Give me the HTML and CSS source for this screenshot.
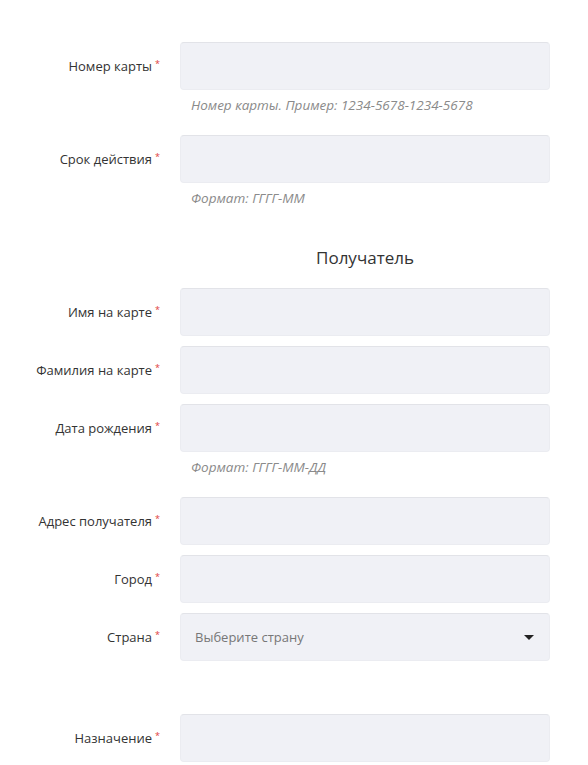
FILE: index.html
```html
<!DOCTYPE html>
<html>
  <head>
    <meta charset="UTF-8">
    <title>Перевод на карту</title>
    <link rel="stylesheet" href="styles.css">
  </head>
  <body>
    <form class="form">
      <!-- карта -->
      <div class="field">
        <label class="label">Номер карты<span class="req">*</span></label>
        <input type="text" class="input">
        <div class="hint">Номер карты. Пример: 1234-5678-1234-5678</div>
      </div>
      <div class="field">
        <label class="label">Срок действия<span class="req">*</span></label>
        <input type="text" class="input">
        <div class="hint">Формат: ГГГГ-ММ</div>
      </div>

      <div class="section-title">Получатель</div>

      <div class="field">
        <label class="label">Имя на карте<span class="req">*</span></label>
        <input type="text" class="input">
      </div>
      <div class="field">
        <label class="label">Фамилия на карте<span class="req">*</span></label>
        <input type="text" class="input">
      </div>
      <div class="field">
        <label class="label">Дата рождения<span class="req">*</span></label>
        <input type="text" class="input">
        <div class="hint">Формат: ГГГГ-ММ-ДД</div>
      </div>
      <div class="field">
        <label class="label">Адрес получателя<span class="req">*</span></label>
        <input type="text" class="input">
      </div>
      <div class="field">
        <label class="label">Город<span class="req">*</span></label>
        <input type="text" class="input">
      </div>
      <div class="field field-spaced">
        <label class="label">Страна<span class="req">*</span></label>
        <div class="input select">
          <span class="select-text">Выберите страну</span>
          <svg class="caret" width="10" height="5" viewBox="0 0 10 5"><path d="M0 0h10L5 5z" fill="#222"/></svg>
        </div>
      </div>
      <div class="field">
        <label class="label">Назначение<span class="req">*</span></label>
        <input type="text" class="input">
      </div>
    </form>
  </body>
</html>
```

FILE: styles.css
```css
/* базовые стили */
html,body{margin:0;padding:0;background:#fff;color:#333;font-family:'Open Sans','Liberation Sans',sans-serif;}
.form{padding-top:42px;width:588px;}

/* строки формы */
.field{display:grid;grid-template-columns:160px 370px;column-gap:20px;align-items:center;margin-bottom:10px;}
.field-spaced{margin-bottom:53px;}
.label{text-align:right;font-size:13px;color:#333;white-space:nowrap;}
.req{color:#e0403a;font-size:9px;position:relative;top:-4px;margin-left:3px;}
.input{box-sizing:border-box;height:48px;width:370px;border:1px solid #ebecf1;border-top-color:#e2e3e8;border-radius:4px;background:#f0f1f6;outline:none;font-size:13px;}
.hint{grid-column:2;padding:7px 0 12px 11px;font-size:13.5px;line-height:16px;font-style:italic;color:#8a8a8a;}

/* заголовок секции */
.section-title{margin:28px 0 18px 180px;width:370px;text-align:center;font-size:17px;line-height:24px;color:#333;}

/* выпадающий список */
.select{display:flex;align-items:center;justify-content:space-between;padding:0 15px 0 14px;}
.select-text{color:#777;font-size:13px;}
```
